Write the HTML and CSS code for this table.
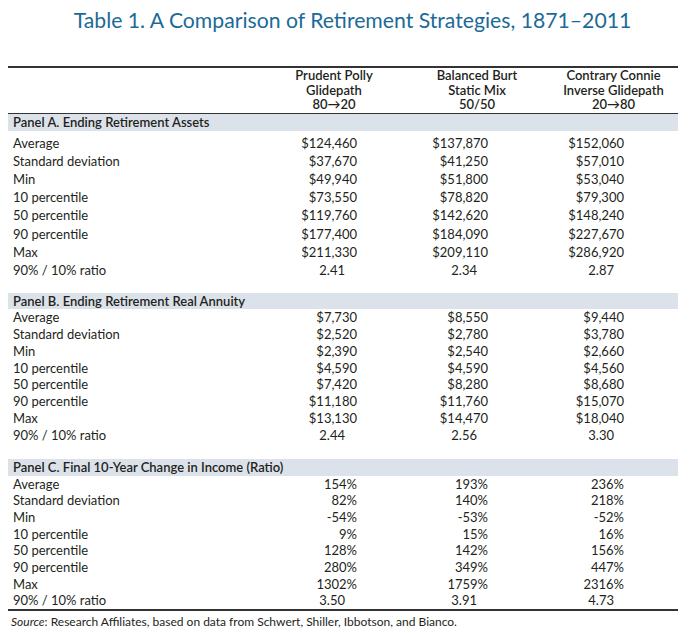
FILE: index.html
```html
<!DOCTYPE html>
<html>
<head>
<meta charset="utf-8">
<link rel="stylesheet" href="styles.css">
</head>
<body>
<h1 class="title">Table 1. A Comparison of Retirement Strategies, 1871–2011</h1>
<table class="tbl">
  <colgroup>
    <col class="c-label"><col class="c-1"><col class="c-2"><col class="c-3">
  </colgroup>
  <thead>
    <tr class="head">
      <th></th>
      <th>Prudent Polly<br>Glidepath<br>80→20</th>
      <th>Balanced Burt<br>Static Mix<br>50/50</th>
      <th>Contrary Connie<br>Inverse Glidepath<br>20→80</th>
    </tr>
  </thead>
  <tbody class="panel-a">
    <tr class="band"><td colspan="4">Panel A. Ending Retirement Assets</td></tr>
    <tr class="spacer spacer-s"><td colspan="4"></td></tr>
    <tr class="row"><td>Average</td><td>$124,460</td><td>$137,870</td><td>$152,060</td></tr>
    <tr class="row"><td>Standard deviation</td><td>$37,670</td><td>$41,250</td><td>$57,010</td></tr>
    <tr class="row"><td>Min</td><td>$49,940</td><td>$51,800</td><td>$53,040</td></tr>
    <tr class="row"><td>10 percentile</td><td>$73,550</td><td>$78,820</td><td>$79,300</td></tr>
    <tr class="row"><td>50 percentile</td><td>$119,760</td><td>$142,620</td><td>$148,240</td></tr>
    <tr class="row"><td>90 percentile</td><td>$177,400</td><td>$184,090</td><td>$227,670</td></tr>
    <tr class="row"><td>Max</td><td>$211,330</td><td>$209,110</td><td>$286,920</td></tr>
    <tr class="row ratio"><td>90% / 10% ratio</td><td>2.41</td><td>2.34</td><td>2.87</td></tr>
    <tr class="spacer spacer-l"><td colspan="4"></td></tr>
  </tbody>
  <tbody class="panel-b">
    <tr class="band"><td colspan="4">Panel B. Ending Retirement Real Annuity</td></tr>
    <tr class="row"><td>Average</td><td>$7,730</td><td>$8,550</td><td>$9,440</td></tr>
    <tr class="row"><td>Standard deviation</td><td>$2,520</td><td>$2,780</td><td>$3,780</td></tr>
    <tr class="row"><td>Min</td><td>$2,390</td><td>$2,540</td><td>$2,660</td></tr>
    <tr class="row"><td>10 percentile</td><td>$4,590</td><td>$4,590</td><td>$4,560</td></tr>
    <tr class="row"><td>50 percentile</td><td>$7,420</td><td>$8,280</td><td>$8,680</td></tr>
    <tr class="row"><td>90 percentile</td><td>$11,180</td><td>$11,760</td><td>$15,070</td></tr>
    <tr class="row"><td>Max</td><td>$13,130</td><td>$14,470</td><td>$18,040</td></tr>
    <tr class="row ratio"><td>90% / 10% ratio</td><td>2.44</td><td>2.56</td><td>3.30</td></tr>
    <tr class="spacer spacer-m"><td colspan="4"></td></tr>
  </tbody>
  <tbody class="panel-c">
    <tr class="band"><td colspan="4">Panel C. Final 10-Year Change in Income (Ratio)</td></tr>
    <tr class="row"><td>Average</td><td>154%</td><td>193%</td><td>236%</td></tr>
    <tr class="row"><td>Standard deviation</td><td>82%</td><td>140%</td><td>218%</td></tr>
    <tr class="row"><td>Min</td><td>-54%</td><td>-53%</td><td>-52%</td></tr>
    <tr class="row"><td>10 percentile</td><td>9%</td><td>15%</td><td>16%</td></tr>
    <tr class="row"><td>50 percentile</td><td>128%</td><td>142%</td><td>156%</td></tr>
    <tr class="row"><td>90 percentile</td><td>280%</td><td>349%</td><td>447%</td></tr>
    <tr class="row"><td>Max</td><td>1302%</td><td>1759%</td><td>2316%</td></tr>
    <tr class="row ratio"><td>90% / 10% ratio</td><td>3.50</td><td>3.91</td><td>4.73</td></tr>
  </tbody>
</table>
<p class="source"><em>Source</em>: Research Affiliates, based on data from Schwert, Shiller, Ibbotson, and Bianco.</p>
</body>
</html>
```
FILE: styles.css
```css
html, body {
  margin: 0;
  padding: 0;
  background: #ffffff;
}
body {
  font-family: "Lato", "Liberation Sans", sans-serif;
  color: #231f20;
  width: 690px;
}
.title {
  margin: 0 0 32px 0;
  padding: 6px 0 0 15px;
  font-size: 21.2px;
  line-height: 28px;
  font-weight: 400;
  color: #1c6a98;
  text-align: center;
}
.tbl {
  margin: 0 0 0 8px;
  width: 670px;
  border-collapse: collapse;
  table-layout: fixed;
  border-top: 2px solid #333;
  border-bottom: 2px solid #333;
  font-size: 13px;
}
.c-label { width: 255px; }
.c-1 { width: 142px; }
.c-2 { width: 144px; }
.c-3 { width: 129px; }
.tbl td, .tbl th {
  padding: 0;
  white-space: nowrap;
}
.head th {
  border-bottom: 1px solid #333;
  font-weight: 600;
  text-align: center;
  line-height: 14.5px;
  vertical-align: middle;
  padding-bottom: 1px;
  font-size: 13px;
}
.band td {
  background: #dce2ea;
  font-weight: 600;
  padding-left: 5px;
  height: 17px;
  line-height: 17px;
  font-size: 13px;
}
.panel-b .band td { height: 16px; line-height: 16px; }
.spacer-s td { height: 3px; }
.spacer-l td { height: 14px; }
.spacer-m td { height: 15px; }
.tbl .row td {
  line-height: 16.7px;
  height: 16.7px;
  text-align: right;
}
.tbl .panel-b .row td { line-height: 16.8px; height: 16.8px; }
.tbl .panel-a .row td {
  line-height: 18.2px;
  height: 18.2px;
}
.tbl .row td:nth-child(1) { text-align: left; padding-left: 5px; }
.tbl .row td:nth-child(2) { padding-right: 48px; }
.tbl .row td:nth-child(3) { padding-right: 61px; }
.tbl .row td:nth-child(4) { padding-right: 54px; }
.tbl .row.ratio td:nth-child(2) { padding-right: 60px; }
.tbl .row.ratio td:nth-child(3) { padding-right: 72px; }
.tbl .row.ratio td:nth-child(4) { padding-right: 64px; }
.source {
  margin: 3px 0 0 11px;
  font-size: 12px;
  line-height: 16px;
}
.source em { font-style: italic; }
```
